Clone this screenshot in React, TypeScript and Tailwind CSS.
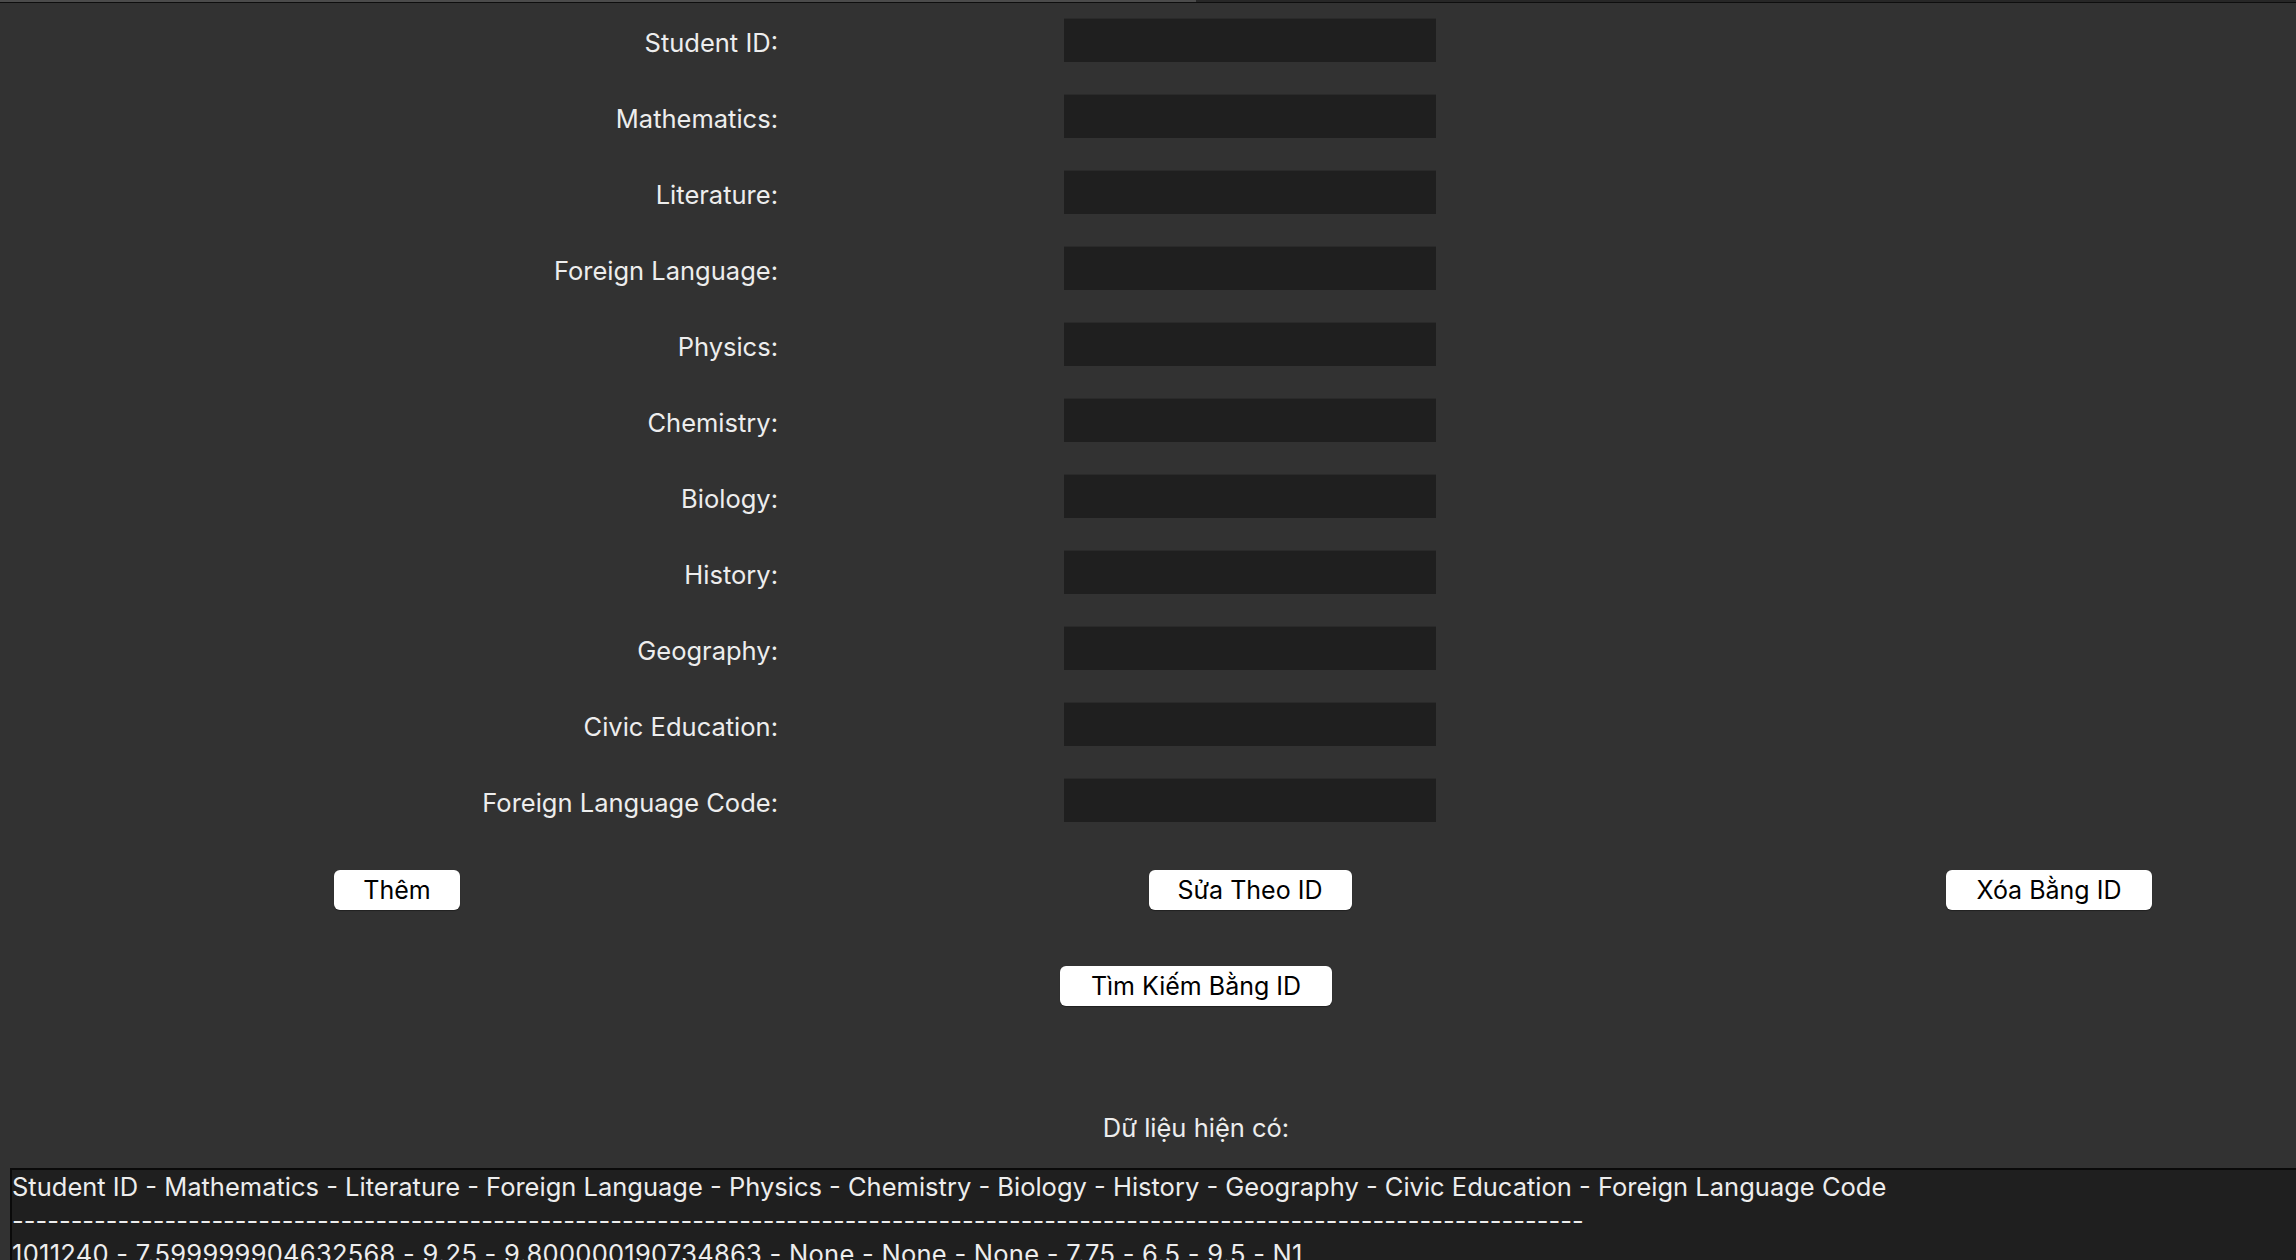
import React from "react";

const fields = [
  "Student ID:",
  "Mathematics:",
  "Literature:",
  "Foreign Language:",
  "Physics:",
  "Chemistry:",
  "Biology:",
  "History:",
  "Geography:",
  "Civic Education:",
  "Foreign Language Code:",
];

const header =
  "Student ID - Mathematics - Literature - Foreign Language - Physics - Chemistry - Biology - History - Geography - Civic Education - Foreign Language Code";

const rows = [
  "1011240 - 7.599999904632568 - 9.25 - 9.800000190734863 - None - None - None - 7.75 - 6.5 - 9.5 - N1",
];

const TkButton = ({ label, width }: { label: string; width: string }) => (
  <button
    className={`h-[40px] ${width} rounded-[6px] bg-white text-black text-[25px] leading-none shadow-[0_1px_1px_rgba(0,0,0,0.35)]`}
  >
    {label}
  </button>
);

const App = () => {
  return (
    <div
      className="w-[2296px] h-[1260px] overflow-hidden bg-[#323232] text-[#ededed]"
      style={{ fontFamily: "Inter, 'Noto Sans', sans-serif" }}
    >
      {/* window top edge */}
      <div className="flex h-[2px]">
        <div className="w-[1196px] bg-[#4b4b4b]" />
        <div className="flex-1 bg-[#272727]" />
      </div>
      <div className="h-[1px] bg-[#0e0e0e]" />

      <div className="w-[2392px]">
        <div className="grid grid-cols-[794px_912px] gap-y-[32px] pt-[15px]">
          {fields.map((f) => (
            <React.Fragment key={f}>
              <div className="flex items-center justify-end pr-[16px] pt-[5px] text-[25.5px] leading-none">
                {f}
              </div>
              <div className="justify-self-center w-[372px] h-[44px] bg-[#1f1f1f] border-t border-[#2a2a2a]" />
            </React.Fragment>
          ))}
        </div>

        <div className="grid grid-cols-[794px_912px_686px] justify-items-center mt-[48px]">
          <TkButton label="Thêm" width="w-[126px]" />
          <TkButton label="Sửa Theo ID" width="w-[203px]" />
          <TkButton label="Xóa Bằng ID" width="w-[206px]" />
        </div>

        <div className="flex justify-center mt-[56px]">
          <TkButton label="Tìm Kiếm Bằng ID" width="w-[272px]" />
        </div>

        <div className="mt-[105px] text-center text-[25.5px] leading-[33px]">
          Dữ liệu hiện có:
        </div>
      </div>

      <div className="ml-[10px] mt-[24px] h-[200px] bg-[#1f1f1f] border-l-2 border-t-2 border-[#0a0a0a] text-[25.5px] leading-[33.5px] whitespace-pre">
        <div>{header}</div>
        <div>{"-".repeat(134)}</div>
        {rows.map((r) => (
          <div key={r} className="tracking-[0.27px]">
            {r}
          </div>
        ))}
      </div>
    </div>
  );
};

export default App;
